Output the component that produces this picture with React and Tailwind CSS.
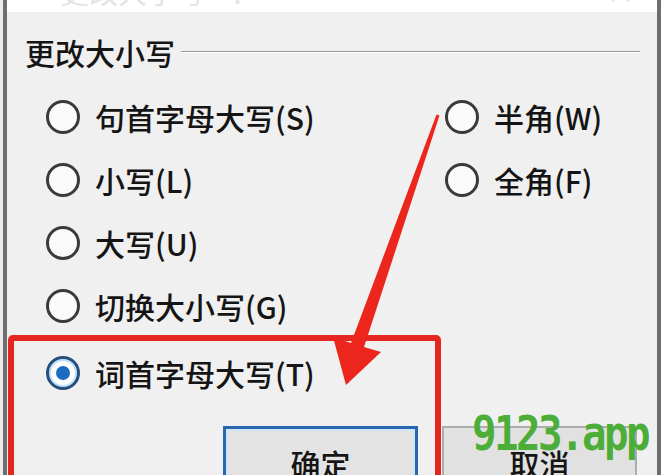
import React from 'react';

const cjk = "font-['Noto_Sans_CJK_SC','Noto_Sans',sans-serif]";

const Radio = ({ checked }) =>
  checked ? (
    <div className="w-[34px] h-[34px] rounded-full border-[3px] border-[#24507e] bg-white shadow-[inset_0_0_0_2px_#bfe0f7] flex items-center justify-center shrink-0">
      <div className="w-[14px] h-[14px] rounded-full bg-[#1c6cc4]" />
    </div>
  ) : (
    <div className="w-[34px] h-[34px] rounded-full border-[3px] border-[#3a3a3a] bg-[#fafafa] shrink-0" />
  );

const Option = ({ label, checked, width }) => (
  <div className={`flex items-center gap-[15px] ${width}`}>
    <Radio checked={checked} />
    <span className="text-[30px] leading-[34px] font-medium text-[#151515]">{label}</span>
  </div>
);

const App = () => {
  const rows = [
    ['句首字母大写(S)', '半角(W)'],
    ['小写(L)', '全角(F)'],
    ['大写(U)', null],
    ['切换大小写(G)', null],
  ];

  return (
    <div className={`relative w-[665px] h-[475px] overflow-hidden bg-white flex ${cjk}`}>
      <div className="w-[3px] bg-[#ececec]" />
      <div className="w-[4px] bg-[#6e6e6e]" />

      {/* dialog */}
      <div className="flex-1 flex flex-col min-h-0">
        {/* title bar, mostly scrolled off the top */}
        <div className="h-[12px] shrink-0 bg-white overflow-hidden">
          <div className="flex items-end text-[29px] leading-[30px] text-[#e4e4e4] -mt-[24px] pl-[53px]">
            <span>更改大小写</span>
            <span className="ml-[26px]">?</span>
            <span className="ml-auto mr-[22px]">×</span>
          </div>
        </div>

        <div className="flex-1 min-h-0 overflow-hidden bg-[#f0f0f0] flex flex-col">
          {/* group header */}
          <div className="mt-[25px] h-[30px] shrink-0 flex items-center pl-[18px] pr-[17px] gap-[6px]">
            <span className="text-[30px] leading-[30px] font-medium text-[#151515]">更改大小写</span>
            <div className="flex-1 h-[2px] border-t border-[#9a9a9a] border-b border-b-white" />
          </div>

          {/* options */}
          <div className="mt-[18px] pl-[39px] flex flex-col shrink-0">
            {rows.map(([left, right], i) => (
              <div key={i} className="h-[63px] flex items-center">
                <Option label={left} width="w-[399px]" />
                {right && <Option label={right} />}
              </div>
            ))}
            <div className="mt-[4px] h-[63px] flex items-center">
              <Option label="词首字母大写(T)" checked width="w-[399px]" />
            </div>
          </div>

          {/* buttons */}
          <div className="mt-[22px] pl-[216px] flex gap-[24px] shrink-0">
            <div className="w-[195px] h-[70px] border-[3px] border-[#2866ad] bg-[#e3e3e3] shadow-[inset_0_0_0_2px_#cfe6f8] flex justify-center pt-[19px]">
              <span className="text-[30px] leading-[30px] font-medium text-[#151515]">确定</span>
            </div>
            <div className="w-[195px] h-[70px] border-2 border-[#adadad] bg-[#e1e1e1] flex justify-center pt-[20px]">
              <span className="text-[30px] leading-[30px] font-medium text-[#151515]">取消</span>
            </div>
          </div>
        </div>
      </div>

      <div className="w-[4px] bg-[#6e6e6e]" />
      <div className="w-[4px] bg-white" />

      {/* red highlight box */}
      <div className="absolute left-[8px] top-[335px] w-[433px] h-[170px] border-[6px] border-[#e3261f] rounded-[5px] pointer-events-none" />

      {/* red arrow */}
      <svg className="absolute inset-0 pointer-events-none" width="665" height="475" viewBox="0 0 665 475">
        <polygon
          points="439.5,115.5 364,347 381,352 346,385 333,337 351,343 436.5,114.5"
          fill="#ec251d"
        />
      </svg>

      {/* watermark */}
      <div className="absolute left-[472px] top-[403px] font-['DejaVu_Sans_Mono',monospace] font-bold text-[48px] leading-[60px] tracking-[-3px] text-[#4cae38] origin-left scale-x-[0.85]">
        9123.app
      </div>
    </div>
  );
};

export default App;
